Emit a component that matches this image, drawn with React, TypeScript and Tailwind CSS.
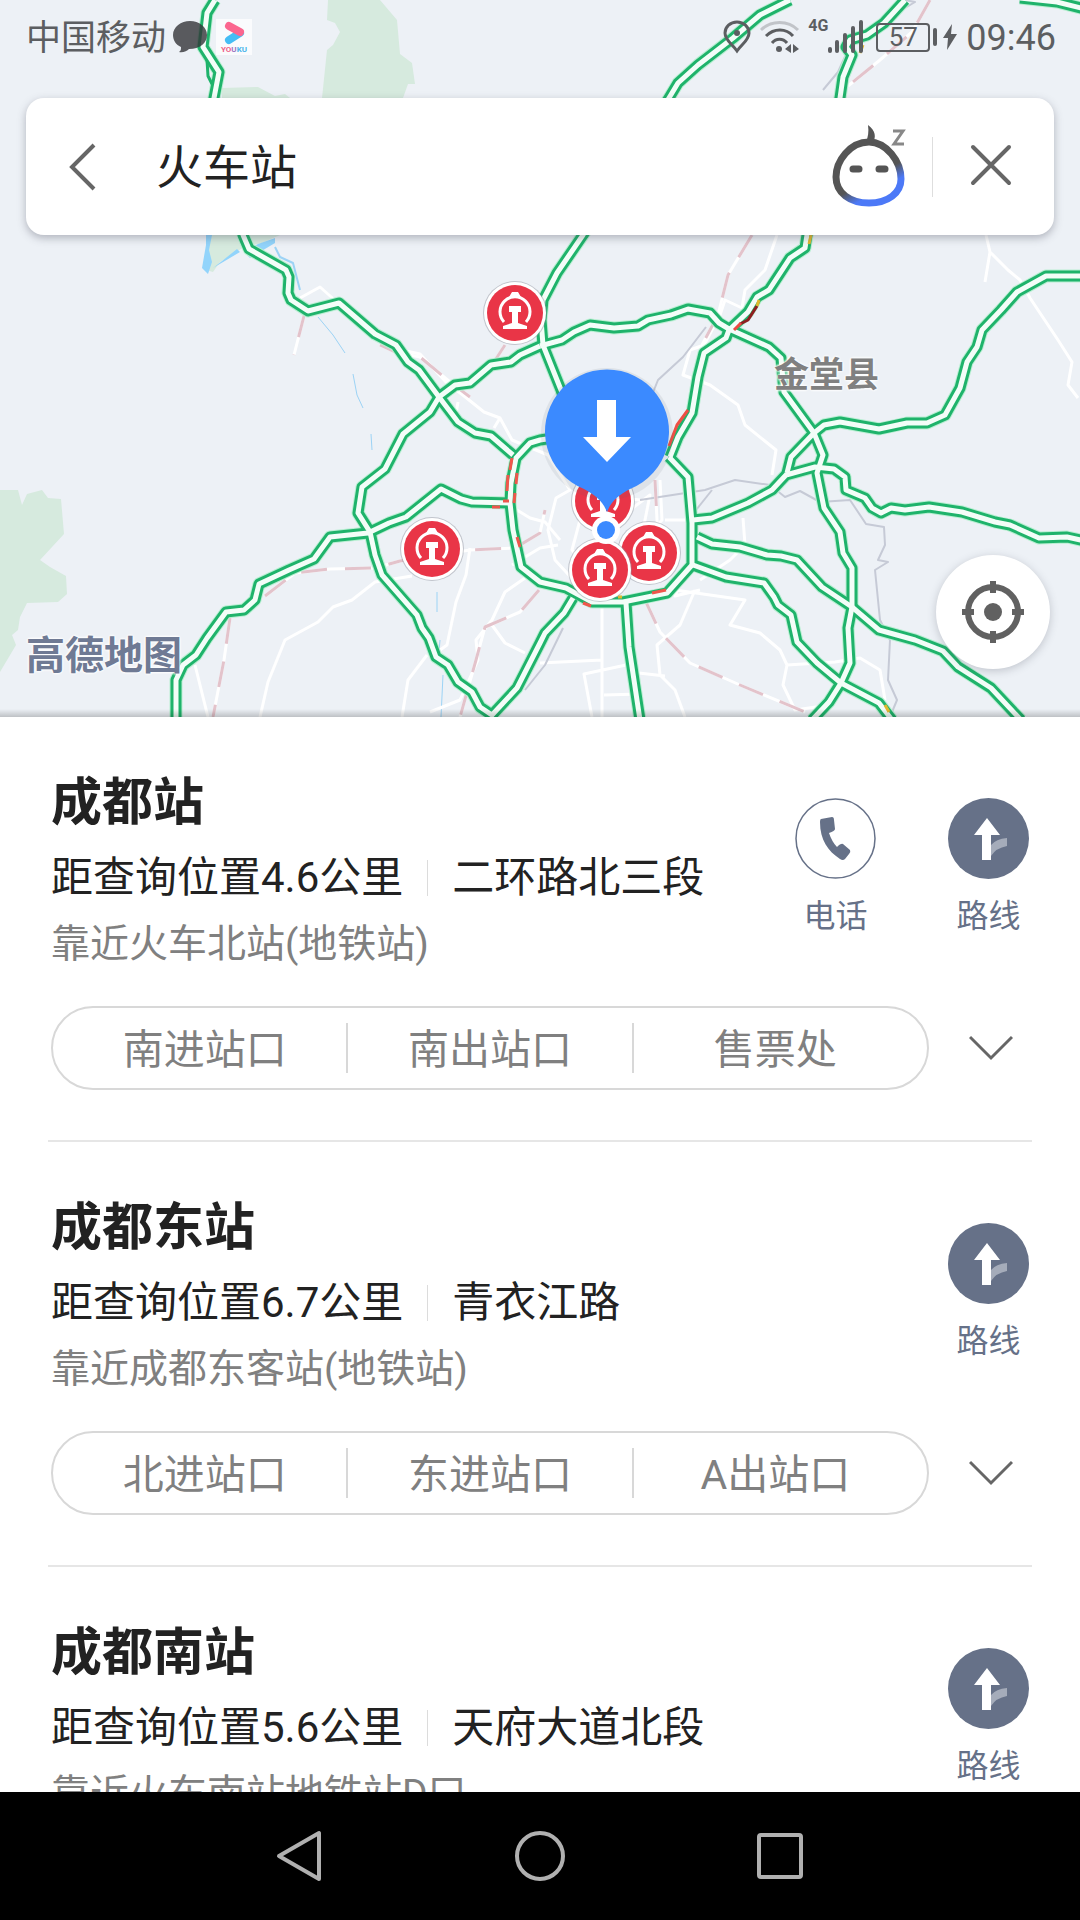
import { ReactNode, useState } from "react";

interface IStation {
  id: number;
  name: string;
  distance: string;
  road: string;
  near: string;
  hasPhone: boolean;
  exits: string[];
}

/* ------- DATA -------  */
const stations: IStation[] = [
  {
    id: 1,
    name: "成都站",
    distance: "距查询位置4.6公里",
    road: "二环路北三段",
    near: "靠近火车北站(地铁站)",
    hasPhone: true,
    exits: ["南进站口", "南出站口", "售票处"],
  },
  {
    id: 2,
    name: "成都东站",
    distance: "距查询位置6.7公里",
    road: "青衣江路",
    near: "靠近成都东客站(地铁站)",
    hasPhone: false,
    exits: ["北进站口", "东进站口", "A出站口"],
  },
  {
    id: 3,
    name: "成都南站",
    distance: "距查询位置5.6公里",
    road: "天府大道北段",
    near: "靠近火车南站地铁站D口",
    hasPhone: false,
    exits: [],
  },
];

const highways = [
  "M215 0L207 13L203 47L219 72L214 98L243 235L249 249L286 270L289 277L288 293L291 300L308 311L339 303L375 334L396 345L408 362L419 370L439 397L458 422L475 433L491 436L513 455",
  "M540 346L520 355L511 362L491 365L470 383L455 385L439 397L430 412L403 434L385 469L362 487L358 513L370 532L375 555L382 575L417 615L422 628L429 638L436 657L448 665L458 682L472 692L480 707L492 715L517 688L540 643L545 633L564 613L573 598",
  "M176 720L176 680L183 665L196 655L207 638L226 612L244 610L255 600L259 584L289 570L314 559L330 537L368 533L389 523L406 517L441 489L461 499L472 502L510 503",
  "M600 430L560 437L540 440L530 443L516 458L511 483L510 503L513 530L521 567L540 582L566 588L592 602L623 602L667 593L692 565L692 523L688 477L669 457",
  "M790 0L760 15L733 38L698 65L678 83L669 98L583 235L557 273L543 300L541 320L543 345L561 390L575 430",
  "M540 346L562 340L574 332L590 325L614 328L638 326L648 320L671 315L688 309L710 313L719 323L729 329L769 347L781 358L784 392L814 433L823 455L817 473L824 508L840 532L843 553L852 568L852 607L848 628L850 663L841 683L829 702L812 720",
  "M905 0L884 23L867 35L850 40L846 47L852 55L843 77L840 98L807 235L805 248L790 258L769 290L757 297L748 312L729 330L726 338L704 353L698 377L692 413L678 437L670 457",
  "M1020 -2L1057 2L1085 9",
  "M1085 276L1046 276L1017 292L1001 310L982 330L977 347L967 362L960 388L945 415L927 423L907 423L879 429L840 422L824 425L814 433L791 457L787 473",
  "M693 520L712 518L748 503L772 490L786 475L815 467L834 469L845 477L846 490L865 498L872 508L881 513L891 508L905 510L929 507L962 512L995 522L1010 525L1039 538L1067 537L1085 541",
  "M697 537L712 544L740 547L767 555L781 556L797 560L822 587L852 607L879 630L915 640L943 651L958 667L991 688L1021 720",
  "M693 565L726 577L764 583L774 597L778 605L791 615L797 642L817 663L841 683L879 703L892 720",
  "M626 603L629 647L640 720",
];

const streets = [
  "M300 298L320 287L338 303",
  "M392 348L420 354L446 382L464 396L484 412L500 418L512 440L548 455L570 490L556 498L548 530L555 560L578 585L600 600",
  "M458 402L455 420",
  "M500 418L494 428",
  "M512 507L530 518L545 522L560 540M512 565L540 548L558 545",
  "M260 717L268 682L285 640L318 622L333 607L352 600L375 582L412 576",
  "M470 548L466 575L456 602L447 645L440 650M427 655L408 680L402 717",
  "M195 665L208 717",
  "M525 578L505 592L492 620L476 640L478 660L460 700L430 712",
  "M492 625L505 643L525 653",
  "M777 235L765 270L745 290L742 308L725 300L720 315L704 345L690 350L683 375L710 385L738 405L745 425L776 450L772 475",
  "M986 235L990 252L985 282M990 252L1008 270L1020 280L1030 298L1058 340L1072 362L1068 385L1078 398",
  "M842 98L845 75L853 58",
  "M602 605L602 717M602 660L540 663M626 665L584 674L592 717M604 695L640 694",
  "M700 590L675 596L690 560M675 590L745 600L730 625L760 633L780 650L787 665L783 685L795 710L830 705M787 665L835 662L860 658L880 670L885 700",
  "M695 590L680 625L657 645L660 675L675 690L685 717M630 672L665 676",
  "M743 518L745 545L730 560L700 580M665 520L692 520M660 480L662 520L640 545L650 495L630 510",
  "M640 500L600 495L580 520L572 550L590 570",
];

const railways = [
  "M305 312L294 355",
  "M380 345L395 352L420 357L450 382L470 397",
  "M505 345L492 365",
  "M230 618L224 660L213 717",
  "M265 596L295 573L330 569L375 568L400 561L470 550L515 548L540 533L545 510",
  "M539 590L520 612L485 627L476 660L460 717",
  "M752 235L728 275L718 315L702 345",
  "M930 0L912 32L880 60L848 86",
  "M645 600L660 632L690 663L740 685L805 712",
  "M655 480L658 540",
];

const greyLines = [
  "M905 0L915 2L905 8M848 50L838 72L823 90",
  "M706 327L683 357L658 380L650 400",
  "M640 500L705 490L735 480L770 485L785 497L800 491L820 502L850 500L866 524L884 527L885 545L878 560L888 562L875 570L880 620L890 640L888 680L897 700L890 717",
  "M696 510L712 490",
  "M563 628L545 665L525 690",
];

const slowLines = [
  { d: "M512 458L510 470M508 475L507 491M517 473L516 484M515 493L514 503M503 501H509M492 507H500M517 537L520 547", color: "#f0564c" },
  { d: "M688 410L677 425L669 446", color: "#ee4f45" },
  { d: "M757 306L748 320L740 324", color: "#8e1f20" },
  { d: "M741 323L734 330", color: "#ec4a42" },
  { d: "M811 235L809 244M759 300L757 306M863 45L860 53M885 705L889 712M618 597L622 597", color: "#e0b92e" },
  { d: "M652 593L666 590M583 603L591 606", color: "#f0564c" },
];

const stationPins = [
  [515, 313],
  [432, 549],
  [603, 501],
  [649, 553],
  [600, 570],
];

/* ------- MAP -------  */
function StationPin({ x, y }: { x: number; y: number }) {
  return (
    <g transform={`translate(${x} ${y})`}>
      <circle r="32" fill="#8b8f98" opacity="0.45" />
      <circle r="31" fill="#fff" />
      <circle r="28" fill="#e93547" />
      <path
        d="M-11 9A15 15 0 1 1 11 9"
        fill="none"
        stroke="#fff"
        strokeWidth="3"
      />
      <path d="M-6 -16L-3 -21H3L6 -16ZM-6 -7H6V-1H3L3 10L12 13V16H-12V13L-3 10L-3 -1H-6Z" fill="#fff" />
    </g>
  );
}

function MapCanvas() {
  return (
    <svg
      className="absolute inset-0 h-full w-full"
      viewBox="0 0 1080 717"
      preserveAspectRatio="xMidYMid slice"
      fill="none"
      strokeLinejoin="round"
      aria-label="地图"
      role="img"
    >
      <rect width="1080" height="717" fill="#edf1f6" />
      <g fill="#d6eade">
        <path d="M328 0H380L397 20L400 54L412 63L415 84L408 84L403 98H322L327 50L333 45L340 32L335 23L327 20Z" />
        <path d="M222 88L258 87L275 96L285 94L290 98H222Z" />
        <path d="M0 490H18L22 505L27 494L42 490L48 498L61 499L64 534L40 560L50 567L66 576L67 594L58 602L27 603L20 617L18 630L12 635L16 645L0 672Z" />
        <path d="M208 235H280L262 243L244 247L220 262L213 272L206 270Z" />
      </g>
      <path d="M212 235L209 250L212 262L208 274L202 268L206 245L206 235ZM213 268L240 252L237 249L222 261ZM244 252L250 258L275 243V238L258 244Z" fill="#92d4fb" />
      <g stroke="#9cd3f5" strokeWidth="2">
        <path d="M275 247L280 257L293 263L300 290" />
        <path d="M318 317L333 335L345 353M353 374L357 395L363 408M371 434L372 450M437 592V612M440 640L439 652M443 675L441 717" strokeWidth="1" />
      </g>
      <g stroke="#fff" strokeWidth="3">
        {streets.map((d) => (
          <path key={d} d={d} />
        ))}
      </g>
      <g stroke="#c6cad6" strokeWidth="2">
        {greyLines.map((d) => (
          <path key={d} d={d} />
        ))}
      </g>
      <g>
        {railways.map((d) => (
          <path key={d} d={d} stroke="#fff" strokeWidth="3" />
        ))}
        {railways.map((d) => (
          <path key={d} d={d} stroke="#e3c3cb" strokeWidth="3" strokeDasharray="26 18" />
        ))}
      </g>
      <g stroke="#b9efd2" strokeWidth="13">
        {highways.map((d) => (
          <path key={d} d={d} />
        ))}
      </g>
      <path d="M203 47L207 60L208 76L212 84" stroke="#1fb36b" strokeWidth="3" />
      <g stroke="#1fb36b" strokeWidth="11">
        {highways.map((d) => (
          <path key={d} d={d} />
        ))}
      </g>
      <g stroke="#f3fdf8" strokeWidth="5">
        {highways.map((d) => (
          <path key={d} d={d} />
        ))}
      </g>
      {slowLines.map(({ d, color }) => (
        <path key={d} d={d} stroke={color} strokeWidth="3" />
      ))}
      {stationPins.map(([x, y]) => (
        <StationPin key={x} x={x} y={y} />
      ))}
      {/* selected place */}
      <circle cx="607" cy="434" r="66" fill="#5b6470" opacity="0.1" />
      <path
        d="M607 512C602 500 596 496 584 489A62 62 0 1 1 630 489C618 496 612 500 607 512Z"
        fill="#3b8aff"
      />
      <path d="M597 400H616V437H631L607 462L583 437H597Z" fill="#fff" />
      <circle cx="606" cy="530" r="14" fill="#fff" />
      <circle cx="606" cy="530" r="9" fill="#3b8aff" />
    </svg>
  );
}

/* ------- STATUS BAR -------  */
function StatusBar() {
  return (
    <div className="relative flex h-[98px] items-start justify-between pt-[14px] pr-6 pl-[26px] text-[#5c5e61]">
      <div className="flex h-[46px] items-center">
        <span className="pt-1 text-[35px]">中国移动</span>
        <svg className="ml-[7px] h-[34px] w-[34px]" viewBox="0 0 34 34" fill="#333538" fillOpacity="0.8">
          <path d="M17 1C26 1 34 7 34 15S27 29 16 29C14 31 10 33 6 32C8 31 8 29 8 27C3 25 0 20 0 15C0 7 8 1 17 1Z" />
        </svg>
        <svg className="ml-[9px] h-9 w-9" viewBox="0 0 36 36">
          <rect width="36" height="36" fill="#fafbfd" />
          <path d="M13 21L24 14" stroke="#45bdf5" strokeWidth="8" strokeLinecap="round" />
          <path d="M13 7L24 13" stroke="#fb668f" strokeWidth="8" strokeLinecap="round" />
          <text x="5" y="33" fontSize="8" fontWeight="700" fill="#ee5f88">
            YO
            <tspan fill="#9b74c0">U</tspan>
            <tspan fill="#4bb5ea">KU</tspan>
          </text>
        </svg>
      </div>
      <div className="flex h-[46px] items-center">
        <svg className="h-[34px] w-7" viewBox="0 0 28 34" fill="none" stroke="currentColor" strokeWidth="3">
          <path d="M14 31C9 24 2 20 2 13A12 11 0 0 1 26 13C26 20 19 24 14 31Z" />
          <circle cx="14" cy="13" r="3" fill="currentColor" stroke="none" />
        </svg>
        <svg className="ml-[9px] h-[34px] w-10" viewBox="0 0 40 34" fill="none" stroke="currentColor" strokeWidth="3">
          <path d="M1 10C11 0 28 0 38 10" opacity="0.3" />
          <path d="M6 16C14 8 26 8 33 16M12 23C16 18 23 18 27 23" />
          <circle cx="19" cy="29" r="3" fill="currentColor" stroke="none" />
          <path d="M25 29L31 24V33ZM39 29L33 24V33Z" fill="currentColor" stroke="none" />
        </svg>
        <span className="ml-2 self-start text-base leading-6 font-bold">4G</span>
        <svg className="h-[34px] w-9" viewBox="0 0 36 34" fill="currentColor">
          <rect x="0" y="27" width="4" height="6" rx="2" />
          <rect x="7" y="20" width="4" height="13" rx="2" />
          <rect x="15" y="13" width="4" height="20" rx="2" />
          <rect x="23" y="6" width="4" height="27" rx="2" />
          <rect x="31" y="0" width="4" height="33" rx="2" />
        </svg>
        <span className="ml-3 flex h-[29px] w-[54px] items-center justify-center rounded border-2 border-current text-[26px] leading-none">
          57
        </span>
        <span className="ml-[3px] h-[18px] w-1 rounded-sm bg-[#5c5e61]" />
        <svg className="ml-[6px] h-7 w-[14px]" viewBox="0 0 14 28" fill="currentColor">
          <path d="M9 1L0 15H5L4 27L14 11H8Z" />
        </svg>
        <span className="ml-[9px] pt-[2px] text-[36px]">09:46</span>
      </div>
    </div>
  );
}

/* ------- SEARCH BAR -------  */
function SearchBar() {
  const [keyword, setKeyword] = useState("火车站");

  return (
    <form
      className="relative mx-[26px] flex h-[137px] items-center rounded-[18px] bg-white shadow-[0_3px_8px_rgba(60,64,80,0.35)]"
      onSubmit={(e) => e.preventDefault()}
    >
      <button type="button" aria-label="返回" className="ml-10 flex h-16 w-9 items-center">
        <svg className="h-12 w-8" viewBox="0 0 32 48" fill="none" stroke="#666" strokeWidth="4">
          <path d="M28 2L6 24L28 46" />
        </svg>
      </button>
      <input
        type="text"
        aria-label="搜索"
        className="ml-[54px] min-w-0 flex-1 bg-transparent pt-[2px] text-[47px] leading-[64px] text-[#222] outline-none"
        value={keyword}
        onChange={(e) => setKeyword(e.target.value)}
      />
      <button type="button" aria-label="语音助手" className="pb-1">
        <svg className="h-[84px] w-20" viewBox="0 0 80 84" fill="none">
          <defs>
            <linearGradient id="face" x1="0.3" y1="0.5" x2="0.6" y2="1">
              <stop offset="0.35" stopColor="#555" />
              <stop offset="0.75" stopColor="#4c79f7" />
            </linearGradient>
          </defs>
          <path
            d="M39 19C56 19 71 38 71 56C71 70 58 80 39 80C20 80 6 70 6 54C6 38 20 19 39 19Z"
            stroke="url(#face)"
            strokeWidth="7"
          />
          <path d="M38 2C46 8 46 14 43 20L36 19C38 14 39 9 38 2Z" fill="#555" />
          <path d="M23 46H29M49 46H55" stroke="#555" strokeWidth="7" strokeLinecap="round" />
          <path d="M63 8H73L64 21H74" stroke="#888" strokeWidth="3" />
        </svg>
      </button>
      <span className="ml-[22px] h-[60px] w-px bg-[#dedede]" />
      <button type="button" aria-label="关闭" className="mr-[41px] ml-9 pb-[3px]">
        <svg className="h-11 w-11" viewBox="0 0 44 44" fill="none" stroke="#666" strokeWidth="4" strokeLinecap="round">
          <path d="M4 4L40 40M40 4L4 40" />
        </svg>
      </button>
    </form>
  );
}

/* ------- STATION LIST -------  */
function ActionButton({ label, children }: { label: string; children: ReactNode }) {
  return (
    <button type="button" className="flex w-[81px] flex-col items-center text-[#667188]">
      {children}
      <span className="mt-[13px] text-[32px] leading-[48px]">{label}</span>
    </button>
  );
}

function StationItem({ station }: { station: IStation }) {
  return (
    <li className="mx-12 shrink-0 border-b-2 border-[#e6e6e6] pr-[3px] pb-[50px] pl-[3px]">
      <div className="flex justify-between pt-[50px]">
        <div className="text-[#222]">
          <h2 className="pt-[2px] text-[51px] leading-[68px] font-bold">{station.name}</h2>
          <p className="mt-[11px] flex items-center text-[42px] leading-[60px]">
            {station.distance}
            <span className="mx-6 h-9 w-px bg-[#dcdcdc]" />
            {station.road}
          </p>
          <p className="mt-2 text-[39px] leading-[56px] text-[#808080]">{station.near}</p>
        </div>
        <div className="flex gap-[72px] pt-[31px]">
          {station.hasPhone && (
            <ActionButton label="电话">
              <svg className="h-[81px] w-[81px]" viewBox="0 0 81 81">
                <circle cx="40.5" cy="40.5" r="39.5" fill="none" stroke="currentColor" strokeWidth="1.5" />
                <path
                  d="M26 21L37 19Q39 19 39 22L40 31Q40 33 34 35Q37 44 42 49Q46 45 48 46L55 52Q56 54 54 56L50 61Q48 63 45 61C33 53 25 42 25 24Q25 21 26 21Z"
                  fill="currentColor"
                />
              </svg>
            </ActionButton>
          )}
          <ActionButton label="路线">
            <svg className="h-[81px] w-[81px]" viewBox="0 0 81 81">
              <circle cx="40.5" cy="40.5" r="40.5" fill="currentColor" />
              <path d="M43 47Q48 41 59 40V48Q48 50 43 58Z" fill="#a5acba" />
              <path d="M39 20L52 37H43V62H34V37H26Z" fill="#fff" />
            </svg>
          </ActionButton>
        </div>
      </div>
      {station.exits.length > 0 && (
        <div className="mt-[34px] flex items-center justify-between">
          <div className="flex h-[84px] max-w-[879px] min-w-0 flex-1 items-center divide-x-2 divide-[#d8d8d8] rounded-full border-2 border-[#d8d8d8] px-[10px]">
            {station.exits.map((exit) => (
              <button
                key={exit}
                type="button"
                className="h-[50px] flex-1 pt-[5px] text-[41px] leading-[45px] text-[#808080]"
              >
                {exit}
              </button>
            ))}
          </div>
          <button type="button" aria-label="展开" className="mr-4 ml-10">
            <svg className="h-[26px] w-11" viewBox="0 0 44 26" fill="none" stroke="#666" strokeWidth="3">
              <path d="M1 2L22 23L43 2" />
            </svg>
          </button>
        </div>
      )}
    </li>
  );
}

/* ------- NAVIGATION -------  */
function SystemNav() {
  return (
    <nav className="flex h-32 shrink-0 items-center justify-center gap-[188px] bg-black">
      <button type="button" aria-label="返回键">
        <svg className="h-[52px] w-[52px]" viewBox="0 0 52 52" fill="none" stroke="#b0b0b0" strokeWidth="4" strokeLinejoin="round">
          <path d="M45 3V49L5 26Z" />
        </svg>
      </button>
      <button type="button" aria-label="主页键">
        <svg className="h-[52px] w-[52px]" viewBox="0 0 52 52" fill="none" stroke="#b0b0b0" strokeWidth="4">
          <circle cx="26" cy="26" r="23" />
        </svg>
      </button>
      <button type="button" aria-label="任务键">
        <svg className="h-[52px] w-[52px]" viewBox="0 0 52 52" fill="none" stroke="#b0b0b0" strokeWidth="4">
          <rect x="5" y="5" width="42" height="42" rx="2" />
        </svg>
      </button>
    </nav>
  );
}

function App() {
  return (
    <main className="flex h-screen flex-col overflow-hidden bg-white font-['Roboto','Noto_Sans_CJK_SC',sans-serif]">
      <header className="relative h-[717px] shrink-0 overflow-hidden">
        <MapCanvas />
        <StatusBar />
        <SearchBar />
        <span className="absolute top-[351px] left-[774px] text-[35px] leading-[50px] font-bold text-[#808080] [text-shadow:0_0_3px_#fff,0_0_3px_#fff,0_0_3px_#fff]">
          金堂县
        </span>
        <span className="absolute bottom-[34px] left-[26px] text-[39px] leading-[54px] font-bold text-[#6f7a94] [text-shadow:0_0_3px_#fff,0_0_3px_#fff,0_0_3px_#fff]">
          高德地图
        </span>
        <button
          type="button"
          aria-label="定位"
          className="absolute right-[30px] bottom-12 flex h-[114px] w-[114px] items-center justify-center rounded-full bg-white shadow-[0_2px_8px_rgba(60,64,80,0.25)]"
        >
          <svg className="h-16 w-16" viewBox="0 0 64 64" fill="none" stroke="#616161" strokeWidth="6">
            <circle cx="32" cy="32" r="25" />
            <path d="M32 1V13M32 51V63M1 32H13M51 32H63" />
            <circle cx="32" cy="32" r="9" fill="#616161" stroke="none" />
          </svg>
        </button>
        <div className="absolute inset-x-0 bottom-0 h-2 bg-linear-to-t from-black/20 to-transparent" />
      </header>
      <ul className="flex min-h-0 flex-1 flex-col overflow-hidden">
        {stations.map((station) => (
          <StationItem key={station.id} station={station} />
        ))}
      </ul>
      <SystemNav />
    </main>
  );
}

export default App;
